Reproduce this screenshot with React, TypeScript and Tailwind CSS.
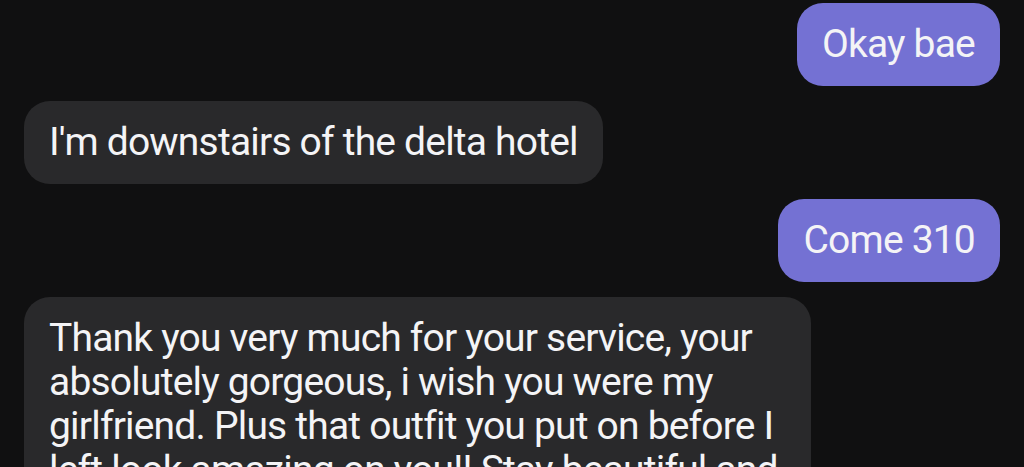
import * as React from "react";

type Msg = { id: number; text: string; mine: boolean };

const messages: Msg[] = [
  { id: 1, text: "Okay bae", mine: true },
  { id: 2, text: "I'm downstairs of the delta hotel", mine: false },
  { id: 3, text: "Come 310", mine: true },
  {
    id: 4,
    text: "Thank you very much for your service, your absolutely gorgeous, i wish you were my girlfriend. Plus that outfit you put on before I left look amazing on you!! Stay beautiful and",
    mine: false,
  },
];

function Bubble({ msg }: { msg: Msg }) {
  return (
    <div className={`flex ${msg.mine ? "justify-end" : "justify-start"}`}>
      <div
        className={`w-fit max-w-[787px] rounded-[26px] px-[25px] pt-[19px] pb-[20px] text-[39px] leading-[44px] tracking-[-0.8px] text-[#f4f4f6] ${
          msg.mine ? "bg-[#7471d3]" : "bg-[#29292b]"
        }`}
      >
        {msg.text}
      </div>
    </div>
  );
}

export default function App() {
  return (
    <div
      className="h-[467px] w-[1024px] overflow-hidden bg-[#101011] px-[24px] pt-[3px]"
      style={{ fontFamily: "Roboto, 'Noto Sans', sans-serif" }}
    >
      <div className="flex flex-col gap-[15px]">
        {messages.map((m) => (
          <Bubble key={m.id} msg={m} />
        ))}
      </div>
    </div>
  );
}
